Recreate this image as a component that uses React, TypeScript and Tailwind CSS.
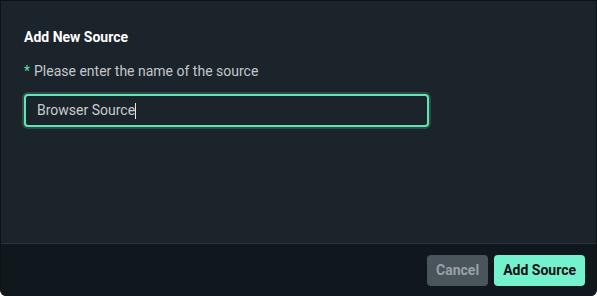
export default function App() {
  return (
    <div
      className="w-[597px] h-[296px] flex flex-col bg-[#1b242a] border-x border-t border-[#0d1216] rounded-b-[6px] overflow-hidden"
      style={{ fontFamily: "Roboto, 'Noto Sans', sans-serif" }}
    >
      {/* body */}
      <div className="flex-1 flex flex-col px-[23px] pt-[28px] border-b border-[#2a343a]">
        <h2 className="text-[14px] leading-[16px] font-bold text-white">Add New Source</h2>
        <p className="mt-[18px] text-[14px] leading-[16px] text-[#c3c7cb]">
          <span className="text-[#5fd9b0] mr-[4px]">*</span>
          Please enter the name of the source
        </p>
        <div className="mt-[15px] w-[405px] h-[33px] flex items-center px-[11px] rounded-[4px] border-2 border-[#62e3b8] ring-2 ring-[#2c4b44] bg-[#1b242a] text-[14px] text-[#c8ccd0]">
          Browser Source
          <span className="w-px h-[16px] bg-[#e5e7eb]" />
        </div>
      </div>
      {/* footer */}
      <div className="h-[52px] flex items-center justify-end gap-[6px] px-[11px] bg-[#11181d]">
        <button className="h-[31px] px-[9px] rounded-[4px] bg-[#4a545b] text-[14px] font-bold text-[#9aa1a7]">
          Cancel
        </button>
        <button className="h-[31px] px-[9px] rounded-[4px] bg-[#74f2ce] text-[14px] font-bold text-[#0b1014]">
          Add Source
        </button>
      </div>
    </div>
  );
}
